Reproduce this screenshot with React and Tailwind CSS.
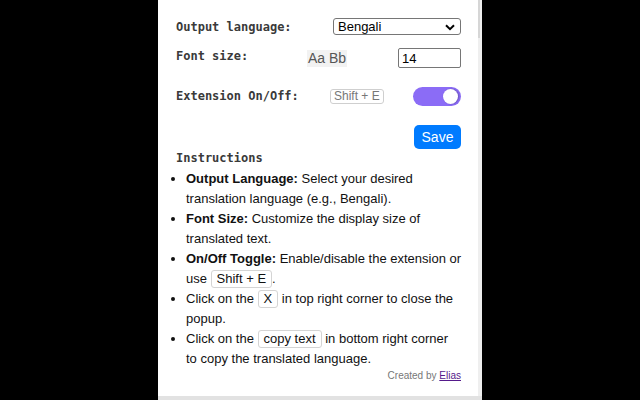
import React from "react";

const mono = { fontFamily: '"DejaVu Sans Mono", "Liberation Mono", monospace' };

function Key({ children }) {
  return (
    <span className="inline-block border border-[#d4d4d4] rounded-[3px] px-[5px] leading-[16px]">
      {children}
    </span>
  );
}

export default function App() {
  return (
    <div className="w-full h-[400px] bg-black flex justify-center font-['Liberation_Sans',Arial,sans-serif]">
      <div className="w-[324px] h-[400px] flex flex-col">
        <div className="flex-1 flex bg-white">
          {/* popup body */}
          <div className="w-[320px] pl-[18px] pr-[17px] pt-[18px] flex flex-col">
            <div className="flex items-center h-[17px]">
              <span className="text-[12px] font-bold text-[#3a3a3a]" style={mono}>Output language:</span>
              <div className="relative ml-auto w-[128px] h-[17px]">
                <select className="block appearance-none w-full h-[17px] border border-[#767676] rounded-[3px] pl-[4px] py-0 text-[13px] leading-[15px] text-black bg-white">
                  <option>Bengali</option>
                </select>
                <svg className="absolute right-[6px] top-[6px] pointer-events-none" width="10" height="7" viewBox="0 0 10 7">
                  <path d="M1 1.2 L5 5.2 L9 1.2" fill="none" stroke="#000" strokeWidth="2" />
                </svg>
              </div>
            </div>

            <div className="flex items-center h-[20px] mt-[13px]">
              <span className="w-[131px] text-[12px] font-bold text-[#3a3a3a] -mt-[5px]" style={mono}>Font size:</span>
              <span className="bg-[#f2f2f2] text-[#555] text-[14px] leading-[17px] px-[1px]">Aa Bb</span>
              <input
                readOnly
                value="14"
                className="ml-auto w-[63px] h-[20px] border border-[#767676] rounded-[2px] pl-[3px] text-[13px] text-black outline-none"
              />
            </div>

            <div className="flex items-center h-[19px] mt-[19px]">
              <span className="w-[154px] text-[12px] font-bold text-[#3a3a3a] -mt-[2px]" style={mono}>Extension On/Off:</span>
              <span className="border border-[#cfcfcf] rounded-[3px] px-[3px] text-[12px] leading-[13px] text-[#777]">Shift + E</span>
              <div className="ml-auto w-[48px] h-[19px] rounded-full bg-[#8b6cf6] flex items-center justify-end pr-[3px]">
                <div className="w-[15px] h-[15px] rounded-full bg-white shadow-[1px_0_2px_rgba(0,0,0,0.25)]" />
              </div>
            </div>

            <div className="flex justify-end mt-[19px]">
              <button className="w-[47px] h-[24px] rounded-[5px] bg-[#007bff] text-white text-[14px]">Save</button>
            </div>

            <div className="text-[12px] font-bold text-[#3a3a3a] leading-[16px] mt-[1px]" style={mono}>Instructions</div>

            <ul className="list-disc pl-[10px] -mr-[5px] mt-[3px] text-[13px] leading-[20px] text-[#111]">
              <li>
                <b>Output Language:</b> Select your desired translation language (e.g., Bengali).
              </li>
              <li>
                <b>Font Size:</b> Customize the display size of translated text.
              </li>
              <li>
                <b>On/Off Toggle:</b> Enable/disable the extension or use <Key>Shift + E</Key>.
              </li>
              <li>
                Click on the <Key>X</Key> in top right corner to close the popup.
              </li>
              <li>
                Click on the <Key>copy text</Key> in bottom right corner
                <br />
                to copy the translated language.
              </li>
            </ul>

            <div className="text-right text-[10px] text-[#777] leading-[12px] mt-[1px]">
              Created by <a className="text-[#551a8b] underline">Elias</a>
            </div>
          </div>
          {/* scrollbar */}
          <div className="w-[4px] bg-[#efefef] flex flex-col">
            <div className="h-[38px] w-[2px] bg-[#d6d6d6]" />
          </div>
        </div>
        <div className="h-[4px] bg-[#e2e2e2]" />
      </div>
    </div>
  );
}
